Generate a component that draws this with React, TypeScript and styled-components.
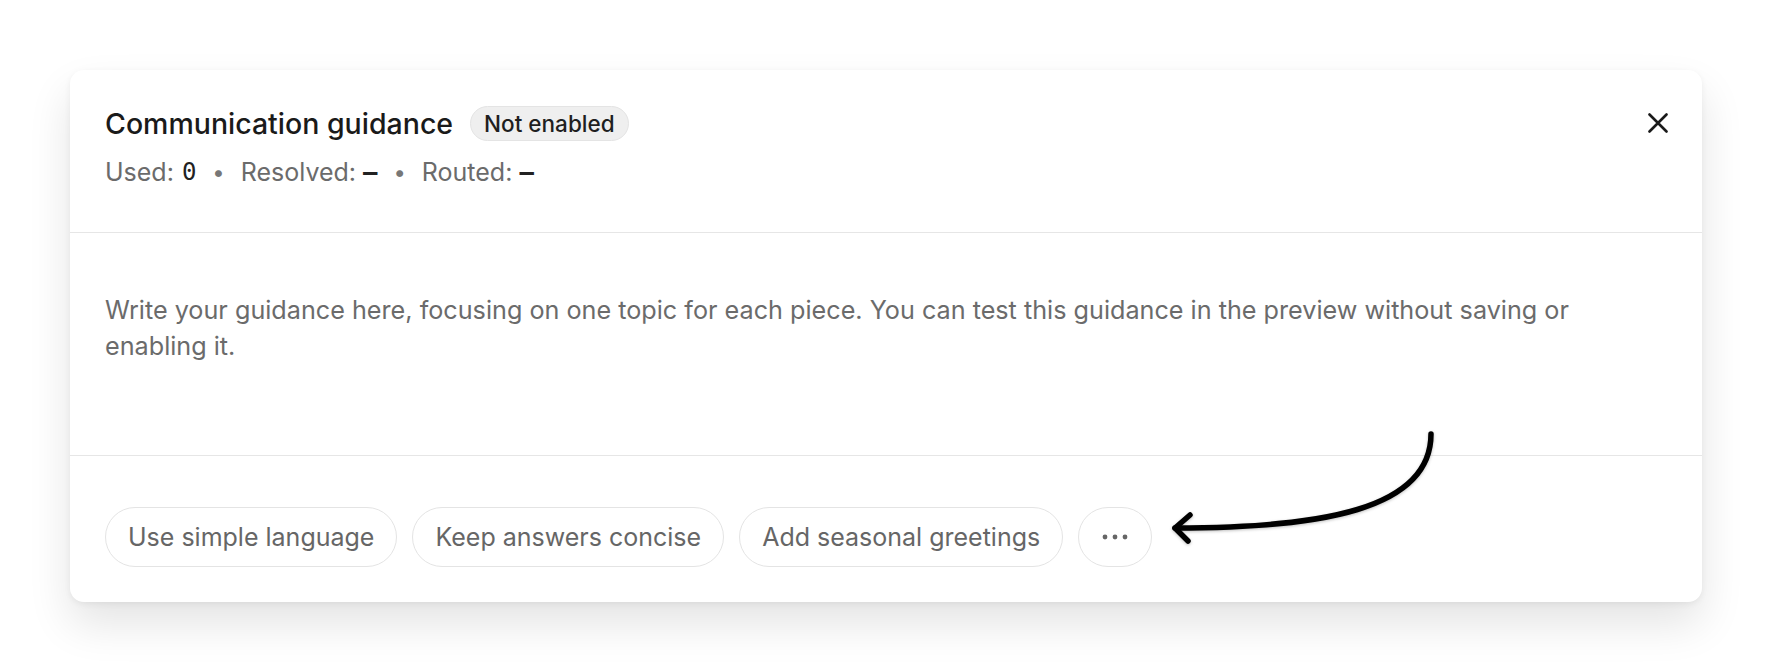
import React from "react";
import styled, { createGlobalStyle } from "styled-components";

const GlobalStyle = createGlobalStyle`
  html, body {
    margin: 0;
    padding: 0;
    background: #ffffff;
  }
  body {
    font-family: Inter, "Noto Sans", sans-serif;
    -webkit-font-smoothing: antialiased;
  }
`;

const Page = styled.div`
  padding: 70px;
`;

const Card = styled.div`
  position: relative;
  background: #ffffff;
  border-radius: 14px;
  box-shadow: 0 22px 44px rgba(0, 0, 0, 0.11), 0 2px 6px rgba(0, 0, 0, 0.06);
`;

const Header = styled.div`
  display: flex;
  justify-content: space-between;
  align-items: flex-start;
  padding: 35px 34px 46px 35px;
  border-bottom: 1px solid #e6e6e6;
`;

const HeaderMain = styled.div`
  display: flex;
  flex-direction: column;
  gap: 17px;
`;

const TitleRow = styled.div`
  display: flex;
  align-items: center;
  gap: 17px;
  height: 36px;
`;

const Title = styled.h2`
  margin: 0;
  font-size: 28.5px;
  font-weight: 500;
  color: #1a1a1a;
`;

const Badge = styled.span`
  display: inline-flex;
  align-items: center;
  height: 35px;
  padding: 0 13px;
  border-radius: 18px;
  background: #efefef;
  border: 1px solid #e4e4e4;
  box-sizing: border-box;
  font-size: 22.5px;
  font-weight: 500;
  color: #1f1f1f;
`;

const Stats = styled.div`
  display: flex;
  align-items: center;
  height: 28px;
  font-size: 25px;
  color: #6b6b6b;
`;

const StatValue = styled.span<{ $dash?: boolean }>`
  font-family: "DejaVu Sans Mono", "Liberation Mono", monospace;
  font-size: 24px;
  font-weight: ${(p) => (p.$dash ? 700 : 400)};
  color: #222;
  margin-left: ${(p) => (p.$dash ? "7px" : "8px")};
`;

const Sep = styled.span`
  margin: 0 16px;
  font-size: 22px;
  color: #777;
`;

const CloseButton = styled.button`
  display: flex;
  align-items: center;
  justify-content: center;
  width: 20px;
  height: 36px;
  margin: 0;
  padding: 0;
  border: none;
  background: none;
  color: #1a1a1a;
  cursor: pointer;
`;

const Body = styled.div`
  padding: 59px 40px 0 35px;
  height: 163px;
  border-bottom: 1px solid #e6e6e6;
`;

const Guidance = styled.p`
  margin: 0;
  font-size: 25.2px;
  line-height: 36px;
  color: #6b6b6b;
`;

const Footer = styled.div`
  display: flex;
  align-items: center;
  gap: 15px;
  padding: 51px 35px 35px 35px;
`;

const Chip = styled.button<{ $square?: boolean }>`
  display: inline-flex;
  align-items: center;
  justify-content: center;
  height: 60px;
  box-sizing: border-box;
  padding: ${(p) => (p.$square ? "0" : "0 22px")};
  width: ${(p) => (p.$square ? "74px" : "auto")};
  border: 1px solid #e4e4e4;
  border-radius: 30px;
  background: #ffffff;
  font-family: Inter, "Noto Sans", sans-serif;
  font-size: 25px;
  color: #666;
  cursor: pointer;
`;

const Arrow = styled.svg`
  position: absolute;
  left: 1090px;
  top: 350px;
  overflow: visible;
  filter: drop-shadow(0 1px 1.5px rgba(0, 0, 0, 0.25));
  pointer-events: none;
`;

const chips = ["Use simple language", "Keep answers concise", "Add seasonal greetings"];

export default function App() {
  return (
    <>
      <GlobalStyle />
      <Page>
        <Card>
          <Header>
            <HeaderMain>
              <TitleRow>
                <Title>Communication guidance</Title>
                <Badge>Not enabled</Badge>
              </TitleRow>
              <Stats>
                Used:<StatValue>0</StatValue>
                <Sep>•</Sep>
                Resolved:<StatValue $dash>—</StatValue>
                <Sep>•</Sep>
                Routed:<StatValue $dash>—</StatValue>
              </Stats>
            </HeaderMain>
            <CloseButton aria-label="Close">
              <svg width="20" height="20" viewBox="0 0 20 20">
                <path d="M1.5 1.5 L18.5 18.5 M18.5 1.5 L1.5 18.5" stroke="currentColor" strokeWidth="2.6" strokeLinecap="round" />
              </svg>
            </CloseButton>
          </Header>
          <Body>
            <Guidance>
              Write your guidance here, focusing on one topic for each piece. You can test this guidance in the preview without saving or enabling it.
            </Guidance>
          </Body>
          <Footer>
            {chips.map((c) => (
              <Chip key={c}>{c}</Chip>
            ))}
            <Chip $square aria-label="More">
              <svg width="26" height="6" viewBox="0 0 26 6">
                <circle cx="3" cy="3" r="2.4" fill="#666" />
                <circle cx="13" cy="3" r="2.4" fill="#666" />
                <circle cx="23" cy="3" r="2.4" fill="#666" />
              </svg>
            </Chip>
          </Footer>
          <Arrow width="290" height="140" viewBox="0 0 290 140">
            <path
              d="M271 14 C 271 90, 160 108, 15 108"
              fill="none"
              stroke="#000"
              strokeWidth="5.5"
              strokeLinecap="round"
            />
            <path
              d="M30 95 L15 108 L28 121"
              fill="none"
              stroke="#000"
              strokeWidth="5.5"
              strokeLinecap="round"
              strokeLinejoin="round"
            />
          </Arrow>
        </Card>
      </Page>
    </>
  );
}
